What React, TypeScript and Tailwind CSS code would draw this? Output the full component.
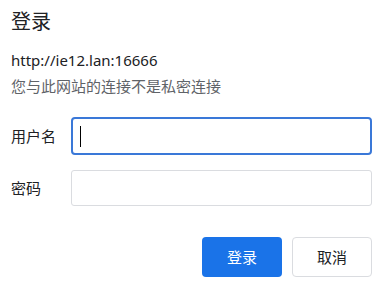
export default function App() {
  const font = { fontFamily: '"Noto Sans", "Noto Sans CJK SC", sans-serif' };
  return (
    <div className="w-[388px] h-[292px] bg-white text-[#202124] pl-[11px] pr-[16px]" style={font}>
      <div className="pt-[8px] text-[20px] leading-[28px]">登录</div>
      <div className="mt-[14px] text-[15px] leading-[20px]">http://ie12.lan:16666</div>
      <div className="mt-[6px] text-[15px] leading-[20px] text-[#5f6368]">您与此网站的连接不是私密连接</div>
      <div className="mt-[21px] flex items-center">
        <div className="w-[60px] text-[15px]">用户名</div>
        <div className="w-[301px] h-[38px] rounded-[4px] border-2 border-[#3a78d8] flex items-center pl-[7px]">
          <div className="w-px h-[21px] bg-black" />
        </div>
      </div>
      <div className="mt-[15px] flex items-center">
        <div className="w-[60px] text-[15px]">密码</div>
        <div className="w-[301px] h-[36px] rounded-[3px] border border-[#dadce0]" />
      </div>
      <div className="mt-[31px] flex justify-end gap-[10px] pr-0">
        <button className="w-[80px] h-[40px] rounded-[4px] bg-[#1a73e8] text-white text-[15px]">登录</button>
        <button className="w-[80px] h-[40px] rounded-[4px] border border-[#dadce0] bg-white text-[#202124] text-[15px]">取消</button>
      </div>
    </div>
  );
}
